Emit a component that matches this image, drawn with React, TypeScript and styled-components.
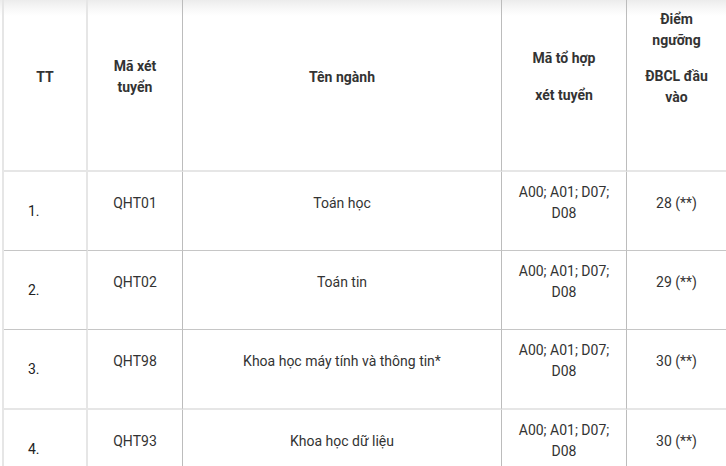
import styled, { createGlobalStyle } from "styled-components"

const GlobalStyle = createGlobalStyle`
  html, body {
    margin: 0;
    padding: 0;
  }
  body {
    width: 726px;
    height: 466px;
    overflow: hidden;
    font-family: Roboto, "Liberation Sans", Arial, sans-serif;
    font-size: 14px;
    color: #333;
    background: linear-gradient(to bottom, #ececec 0, #f7f7f7 8px, #ffffff 16px);
  }
`

const light = "2px solid #e6e6e6"
const dark = "1px solid #bcbcbc"
const thin = "1px solid #c6c6c6"

const Table = styled.div`
  display: grid;
  grid-template-columns: 84px 95px 319px 125px 100px;
  width: max-content;
  margin-left: 2px;
  border-left: ${light};
`

const HeadCell = styled.div<{ $first?: boolean; $top?: boolean }>`
  box-sizing: border-box;
  height: 172px;
  display: flex;
  flex-direction: column;
  justify-content: ${(p) => (p.$top ? "flex-start" : "center")};
  align-items: center;
  text-align: center;
  padding: ${(p) => (p.$top ? "9px 10px 0" : "0 12px")};
  font-weight: 700;
  color: #333;
  border-right: ${(p) => (p.$first ? light : dark)};
  border-bottom: ${light};
`

const HeadPara = styled.p<{ $gap?: number }>`
  margin: 0 0 ${(p) => p.$gap ?? 16}px;
  line-height: 21px;
`

const Cell = styled.div<{ $first?: boolean; $bottom: string; $num?: boolean }>`
  box-sizing: border-box;
  display: flex;
  flex-direction: column;
  justify-content: center;
  align-items: ${(p) => (p.$num ? "flex-start" : "center")};
  text-align: ${(p) => (p.$num ? "left" : "center")};
  padding: ${(p) => (p.$num ? "10px 10px 10px 24px" : "10px 10px")};
  color: ${(p) => (p.$num ? "#222" : "#333")};
  line-height: 21px;
  border-right: ${(p) => (p.$first ? light : dark)};
  border-bottom: ${(p) => p.$bottom};
`

const Para = styled.p`
  margin: 0 0 16px;
  line-height: 21px;
`

const Num = styled.span`
  line-height: 21px;
`

const rows = [
  { tt: "1.", code: "QHT01", name: "Toán học", combo: "A00; A01; D07; D08", score: "28 (**)", bottom: thin },
  { tt: "2.", code: "QHT02", name: "Toán tin", combo: "A00; A01; D07; D08", score: "29 (**)", bottom: thin },
  { tt: "3.", code: "QHT98", name: "Khoa học máy tính và thông tin*", combo: "A00; A01; D07; D08", score: "30 (**)", bottom: light },
  { tt: "4.", code: "QHT93", name: "Khoa học dữ liệu", combo: "A00; A01; D07; D08", score: "30 (**)", bottom: light },
]

export default function App() {
  return (
    <>
      <GlobalStyle />
      <Table>
        <HeadCell $first>
          <HeadPara>TT</HeadPara>
        </HeadCell>
        <HeadCell>
          <HeadPara>Mã xét tuyển</HeadPara>
        </HeadCell>
        <HeadCell>
          <HeadPara>Tên ngành</HeadPara>
        </HeadCell>
        <HeadCell>
          <HeadPara>Mã tổ hợp</HeadPara>
          <HeadPara>xét tuyển</HeadPara>
        </HeadCell>
        <HeadCell $top>
          <HeadPara $gap={15}>Điểm ngưỡng</HeadPara>
          <HeadPara>ĐBCL đầu vào</HeadPara>
        </HeadCell>

        {rows.map((r) => [
          <Cell key={r.tt + "a"} $first $num $bottom={r.bottom}>
            <Num>{r.tt}</Num>
          </Cell>,
          <Cell key={r.tt + "b"} $bottom={r.bottom}>
            <Para>{r.code}</Para>
          </Cell>,
          <Cell key={r.tt + "c"} $bottom={r.bottom}>
            <Para>{r.name}</Para>
          </Cell>,
          <Cell key={r.tt + "d"} $bottom={r.bottom}>
            <Para>{r.combo}</Para>
          </Cell>,
          <Cell key={r.tt + "e"} $bottom={r.bottom}>
            <Para>{r.score}</Para>
          </Cell>,
        ])}
      </Table>
    </>
  )
}
